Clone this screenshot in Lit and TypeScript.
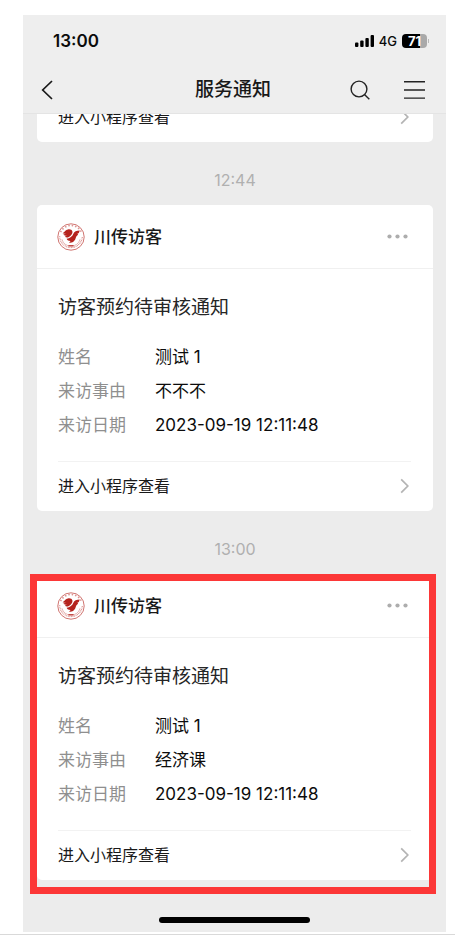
import { LitElement, html, css, svg } from "lit";
import { customElement, property } from "lit/decorators.js";

interface Notice {
  time: string;
  highlighted: boolean;
  fields: { label: string; value: string }[];
}

const NOTICES: Notice[] = [
  {
    time: "12:44",
    highlighted: false,
    fields: [
      { label: "姓名", value: "测试 1" },
      { label: "来访事由", value: "不不不" },
      { label: "来访日期", value: "2023-09-19 12:11:48" },
    ],
  },
  {
    time: "13:00",
    highlighted: true,
    fields: [
      { label: "姓名", value: "测试 1" },
      { label: "来访事由", value: "经济课" },
      { label: "来访日期", value: "2023-09-19 12:11:48" },
    ],
  },
];

const base = css`
  * {
    box-sizing: border-box;
  }
  svg {
    display: block;
    flex: none;
  }
  button {
    display: block;
    padding: 0;
    border: 0;
    background: none;
    color: inherit;
    font: inherit;
    cursor: pointer;
  }
`;

const footerLink = css`
  .open {
    display: flex;
    align-items: center;
    justify-content: space-between;
    height: 49px;
    padding: 0 2px 2px 0;
    box-sizing: border-box;
    color: #191919;
    font-size: 16px;
    line-height: 24px;
    text-decoration: none;
  }
`;

const openLink = () => html`
  <a class="open" href="#detail">
    <span>进入小程序查看</span>
    <svg width="9" height="16" viewBox="0 0 9 16" fill="none" stroke="#b4b4b4" stroke-width="1.7" aria-hidden="true">
      <path d="M1.2 1.3 7.8 8 1.2 14.7" />
    </svg>
  </a>
`;

const crest = svg`
  <circle cx="14" cy="14" r="13.2" fill="#fff" stroke="#c4524d" stroke-width="0.8" />
  <path d="M3.6 9.2A11.4 11.4 0 0 1 24.4 9.2" fill="none" stroke="#dc9390" stroke-width="1.6" stroke-dasharray="1.5 1.9" />
  <path d="M2.7 13.2A11.3 11.3 0 0 0 25.3 13.2" fill="none" stroke="#dc9390" stroke-width="1.3" stroke-dasharray="0.9 0.7" />
  <path d="M4.9 16.2A9.5 9.5 0 0 0 23.1 16.2" fill="none" stroke="#d98783" stroke-width="0.6" />
  <path d="M5.4 10.1C7.3 9.7 7.9 7 11 6.4 13.2 6 15 6.9 15.4 8.6 15.9 10.7 14 12.8 11.8 14.1 10.2 15 8.6 14.6 7.9 13.6L10.6 12.4C8.6 12.9 7 12.6 6.4 11.6L8.9 10.7C7.6 10.9 6.2 10.8 5.4 10.1Z" fill="#b5231d" />
  <path d="M9.6 15.7C12.8 15.2 15.6 13.4 16.5 10.4 17.2 8.3 19.4 7.5 22.8 7.4 22.2 8.3 22.4 9.2 21.6 10.2L20.2 10.4C21.2 10.7 21.2 11.8 20.2 12.6 18.9 13.6 19 15 18.2 16.6 17 19 14.4 20.3 12 19.7L13.6 17.9C11.9 18 10.2 17.2 9.6 15.7Z" fill="#b5231d" />
  <path d="M11.4 22.8H16.6" stroke="#b5231d" stroke-width="1.1" />
`;

@customElement("status-bar")
class StatusBar extends LitElement {
  static styles = [
    base,
    css`
      :host {
        display: flex;
        align-items: center;
        justify-content: space-between;
        height: 52px;
        padding: 0 17px 0 30px;
        color: #0b0b0b;
      }
      .clock {
        font-size: 17px;
        font-weight: 600;
        line-height: 24px;
      }
      .indicators {
        display: flex;
        align-items: center;
        gap: 5px;
      }
      .network {
        font-size: 13px;
        font-weight: 500;
        line-height: 16px;
      }
      .battery {
        display: flex;
        align-items: center;
        gap: 1px;
      }
      .cell {
        width: 25px;
        height: 14px;
        border-radius: 4px;
        background: linear-gradient(to right, #000 18px, #a9a9a9 18px);
        color: #fff;
        font-size: 13px;
        font-weight: 700;
        line-height: 14px;
        text-align: center;
      }
      .nub {
        width: 1px;
        height: 4px;
        background: #b9b9b9;
      }
    `,
  ];

  render() {
    return html`
      <span class="clock">13:00</span>
      <div class="indicators">
        <svg width="19" height="12" viewBox="0 0 19 12" aria-hidden="true">
          <rect x="0" y="7.6" width="3.4" height="4.4" rx="1" />
          <rect x="5.2" y="5.6" width="3.4" height="6.4" rx="1" />
          <rect x="10.4" y="3" width="3.4" height="9" rx="1" />
          <rect x="15.6" y="0" width="3.4" height="12" rx="1" />
        </svg>
        <span class="network">4G</span>
        <div class="battery">
          <div class="cell">71</div>
          <div class="nub"></div>
        </div>
      </div>
    `;
  }
}

@customElement("nav-bar")
class NavBar extends LitElement {
  static styles = [
    base,
    css`
      :host {
        box-sizing: border-box;
        display: grid;
        grid-template-columns: 1fr auto 1fr;
        align-items: center;
        height: 47px;
        padding: 0 21px 0 18px;
        border-bottom: 1px solid #e4e4e4;
        color: #191919;
      }
      .title {
        margin: 0;
        font-size: 19px;
        font-weight: 500;
        line-height: 28px;
      }
      .actions {
        display: flex;
        align-items: center;
        justify-content: flex-end;
        gap: 34px;
      }
    `,
  ];

  render() {
    return html`
      <div>
        <button aria-label="返回">
          <svg width="12" height="20" viewBox="0 0 12 20" fill="none" stroke="#191919" stroke-width="1.7">
            <path d="M11 1 1.7 10 11 19" />
          </svg>
        </button>
      </div>
      <h1 class="title">服务通知</h1>
      <div class="actions">
        <button aria-label="搜索">
          <svg width="20" height="20" viewBox="0 0 20 20" fill="none" stroke="#222" stroke-width="1.4">
            <circle cx="9" cy="9" r="7.9" />
            <path d="M14.5 14.5 19.3 19.3" />
          </svg>
        </button>
        <button aria-label="菜单">
          <svg width="21" height="20" viewBox="0 0 21 20" fill="none" stroke="#222" stroke-width="1.4">
            <path d="M0 1.8H21M0 10H21M0 18.1H21" />
          </svg>
        </button>
      </div>
    `;
  }
}

@customElement("notice-card")
class NoticeCard extends LitElement {
  @property({ attribute: false }) notice!: Notice;

  static styles = [
    base,
    footerLink,
    css`
      :host {
        display: block;
        position: relative;
      }
      .card {
        border-radius: 5px;
        background: #fff;
      }
      .marked {
        border-radius: 0 0 5px 5px;
      }
      .head {
        display: flex;
        align-items: center;
        height: 64px;
        padding: 0 25px 0 20px;
        border-bottom: 1px solid #f0f0f0;
      }
      .name {
        flex: 1;
        margin: 0 0 0 9px;
        color: #191919;
        font-size: 17px;
        font-weight: 500;
        line-height: 24px;
      }
      .body {
        padding: 25px 22px 0 21px;
      }
      .title {
        margin: 0 0 18px;
        color: #262626;
        font-size: 19px;
        font-weight: 400;
        line-height: 28px;
      }
      .fields {
        display: grid;
        grid-template-columns: 97px 1fr;
        margin: 0 0 19px;
        font-size: 17px;
        line-height: 34px;
      }
      .label {
        color: #8f8f8f;
      }
      .value {
        margin: 0;
        color: #0c0c0c;
      }
      .foot {
        border-top: 1px solid #f2f2f2;
      }
      .frame {
        position: absolute;
        inset: 0 -3px -14px -7px;
        border: 7px solid #fc3737;
        pointer-events: none;
      }
    `,
  ];

  render() {
    const { fields, highlighted } = this.notice;
    return html`
      <article class="card ${highlighted ? "marked" : ""}">
        <header class="head">
          <svg width="28" height="28" viewBox="0 0 28 28" aria-hidden="true">${crest}</svg>
          <h2 class="name">川传访客</h2>
          <button aria-label="更多">
            <svg width="21" height="5" viewBox="0 0 21 5" fill="#adadad">
              <circle cx="2.5" cy="2.5" r="2.1" />
              <circle cx="10.5" cy="2.5" r="2.1" />
              <circle cx="18.5" cy="2.5" r="2.1" />
            </svg>
          </button>
        </header>
        <div class="body">
          <h3 class="title">访客预约待审核通知</h3>
          <dl class="fields">
            ${fields.map(
              (f) => html`<dt class="label">${f.label}</dt><dd class="value">${f.value}</dd>`
            )}
          </dl>
          <div class="foot">${openLink()}</div>
        </div>
      </article>
      ${highlighted ? html`<div class="frame"></div>` : ""}
    `;
  }
}

@customElement("app-root")
class AppRoot extends LitElement {
  static styles = [
    base,
    footerLink,
    css`
      :host {
        display: block;
        padding: 15px 0 0;
        background: #fff;
        font-family: Inter, "Noto Sans CJK SC", sans-serif;
      }
      .phone {
        margin: 0 9px 2px 23px;
        background: #ececec;
      }
      .top {
        background: #eeeeee;
      }
      .feed {
        padding: 0 13px 0 14px;
      }
      .previous {
        display: flex;
        flex-direction: column;
        justify-content: flex-end;
        height: 28px;
        padding: 0 22px 0 21px;
        border-radius: 0 0 5px 5px;
        background: #fff;
        overflow: hidden;
      }
      .previous .open {
        flex: none;
      }
      .time {
        display: block;
        padding: 26px 0 13px;
        color: #b0b0b0;
        font-size: 16px;
        line-height: 24px;
        text-align: center;
      }
      .home {
        display: flex;
        justify-content: center;
        padding: 37px 0 9px;
      }
      .pill {
        width: 151px;
        height: 6px;
        border-radius: 3px;
        background: #000;
      }
      .rule {
        height: 1px;
        background: #d9d9d9;
      }
    `,
  ];

  render() {
    return html`
      <div class="phone">
        <div class="top">
          <status-bar></status-bar>
          <nav-bar></nav-bar>
        </div>
        <main class="feed">
          <div class="previous">${openLink()}</div>
          ${NOTICES.map(
            (n) => html`
              <time class="time">${n.time}</time>
              <notice-card .notice=${n}></notice-card>
            `
          )}
        </main>
        <div class="home"><div class="pill"></div></div>
      </div>
      <div class="rule"></div>
    `;
  }
}
